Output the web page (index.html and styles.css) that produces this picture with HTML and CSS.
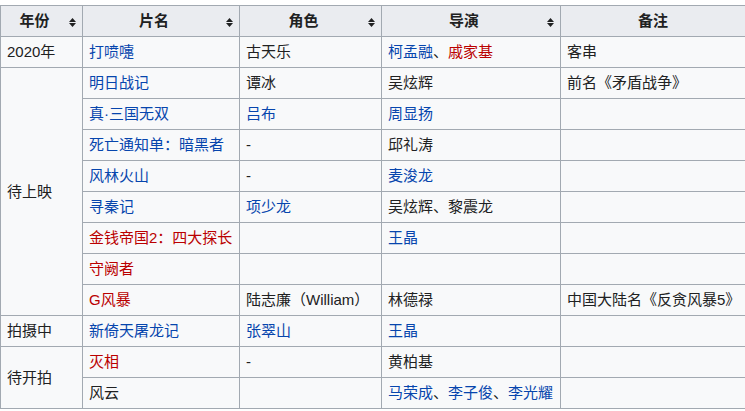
FILE: index.html
```html
<!DOCTYPE html>
<html lang="zh">
<head>
<meta charset="utf-8">
<link rel="stylesheet" href="styles.css">
</head>
<body>
<table class="wikitable">
  <colgroup>
    <col class="c1"><col class="c2"><col class="c3"><col class="c4"><col class="c5">
  </colgroup>
  <thead>
    <tr>
      <th><div class="th-in"><span class="lbl">年份</span><svg class="sort" width="7" height="9" viewBox="0 0 7 9"><path d="M0 4 L3.5 0 L7 4 Z M0 5 L3.5 9 L7 5 Z" fill="#202122"/></svg></div></th>
      <th><div class="th-in"><span class="lbl">片名</span><svg class="sort" width="7" height="9" viewBox="0 0 7 9"><path d="M0 4 L3.5 0 L7 4 Z M0 5 L3.5 9 L7 5 Z" fill="#202122"/></svg></div></th>
      <th><div class="th-in"><span class="lbl">角色</span><svg class="sort" width="7" height="9" viewBox="0 0 7 9"><path d="M0 4 L3.5 0 L7 4 Z M0 5 L3.5 9 L7 5 Z" fill="#202122"/></svg></div></th>
      <th><div class="th-in"><span class="lbl">导演</span><svg class="sort" width="7" height="9" viewBox="0 0 7 9"><path d="M0 4 L3.5 0 L7 4 Z M0 5 L3.5 9 L7 5 Z" fill="#202122"/></svg></div></th>
      <th class="plain">备注</th>
    </tr>
  </thead>
  <tbody>
    <tr>
      <td>2020年</td>
      <td><a class="blue">打喷嚏</a></td>
      <td>古天乐</td>
      <td><a class="blue">柯孟融</a>、<a class="red">戚家基</a></td>
      <td>客串</td>
    </tr>
    <tr>
      <td rowspan="8">待上映</td>
      <td><a class="blue">明日战记</a></td>
      <td>谭冰</td>
      <td>吴炫辉</td>
      <td>前名《矛盾战争》</td>
    </tr>
    <tr>
      <td><a class="blue">真·三国无双</a></td>
      <td><a class="blue">吕布</a></td>
      <td><a class="blue">周显扬</a></td>
      <td></td>
    </tr>
    <tr>
      <td><a class="blue">死亡通知单：暗黑者</a></td>
      <td>-</td>
      <td>邱礼涛</td>
      <td></td>
    </tr>
    <tr>
      <td><a class="blue">风林火山</a></td>
      <td>-</td>
      <td><a class="blue">麦浚龙</a></td>
      <td></td>
    </tr>
    <tr>
      <td><a class="blue">寻秦记</a></td>
      <td><a class="blue">项少龙</a></td>
      <td>吴炫辉、黎震龙</td>
      <td></td>
    </tr>
    <tr>
      <td><a class="red">金钱帝国2：四大探长</a></td>
      <td></td>
      <td><a class="blue">王晶</a></td>
      <td></td>
    </tr>
    <tr>
      <td><a class="red">守阙者</a></td>
      <td></td>
      <td></td>
      <td></td>
    </tr>
    <tr>
      <td><a class="red">G风暴</a></td>
      <td>陆志廉（William）</td>
      <td>林德禄</td>
      <td>中国大陆名《反贪风暴5》</td>
    </tr>
    <tr>
      <td>拍摄中</td>
      <td><a class="blue">新倚天屠龙记</a></td>
      <td><a class="blue">张翠山</a></td>
      <td><a class="blue">王晶</a></td>
      <td></td>
    </tr>
    <tr>
      <td rowspan="2">待开拍</td>
      <td><a class="red">灭相</a></td>
      <td>-</td>
      <td>黄柏基</td>
      <td></td>
    </tr>
    <tr>
      <td>风云</td>
      <td></td>
      <td><a class="blue">马荣成</a>、<a class="blue">李子俊</a>、<a class="blue">李光耀</a></td>
      <td></td>
    </tr>
  </tbody>
</table>
</body>
</html>
```

FILE: styles.css
```css
html, body {
  margin: 0;
  padding: 0;
  background: #ffffff;
}
body {
  font-family: "Liberation Sans", "Noto Sans CJK SC", sans-serif;
  font-size: 15px;
  color: #202122;
}
.wikitable {
  margin-top: 5px;
  border-collapse: collapse;
  table-layout: fixed;
  width: 746px;
  background: #f8f9fa;
  color: #202122;
}
.c1 { width: 82px; }
.c2 { width: 157px; }
.c3 { width: 142px; }
.c4 { width: 179px; }
.c5 { width: 185px; }
.wikitable th,
.wikitable td {
  border: 1px solid #a2a9b1;
  padding: 0 6px;
  height: 31px;
  line-height: 20px;
  vertical-align: middle;
  white-space: nowrap;
  box-sizing: border-box;
}
.wikitable th {
  background: #eaecf0;
  font-weight: bold;
  text-align: center;
}
.th-in {
  display: flex;
  align-items: center;
}
.lbl {
  flex: 1;
  text-align: center;
  margin-right: 7px;
}
.sort {
  flex: none;
  display: block;
  margin-top: 2px;
}
.wikitable td {
  text-align: left;
}
a {
  text-decoration: none;
}
a.blue { color: #0645ad; }
a.red { color: #ba0000; }
```
